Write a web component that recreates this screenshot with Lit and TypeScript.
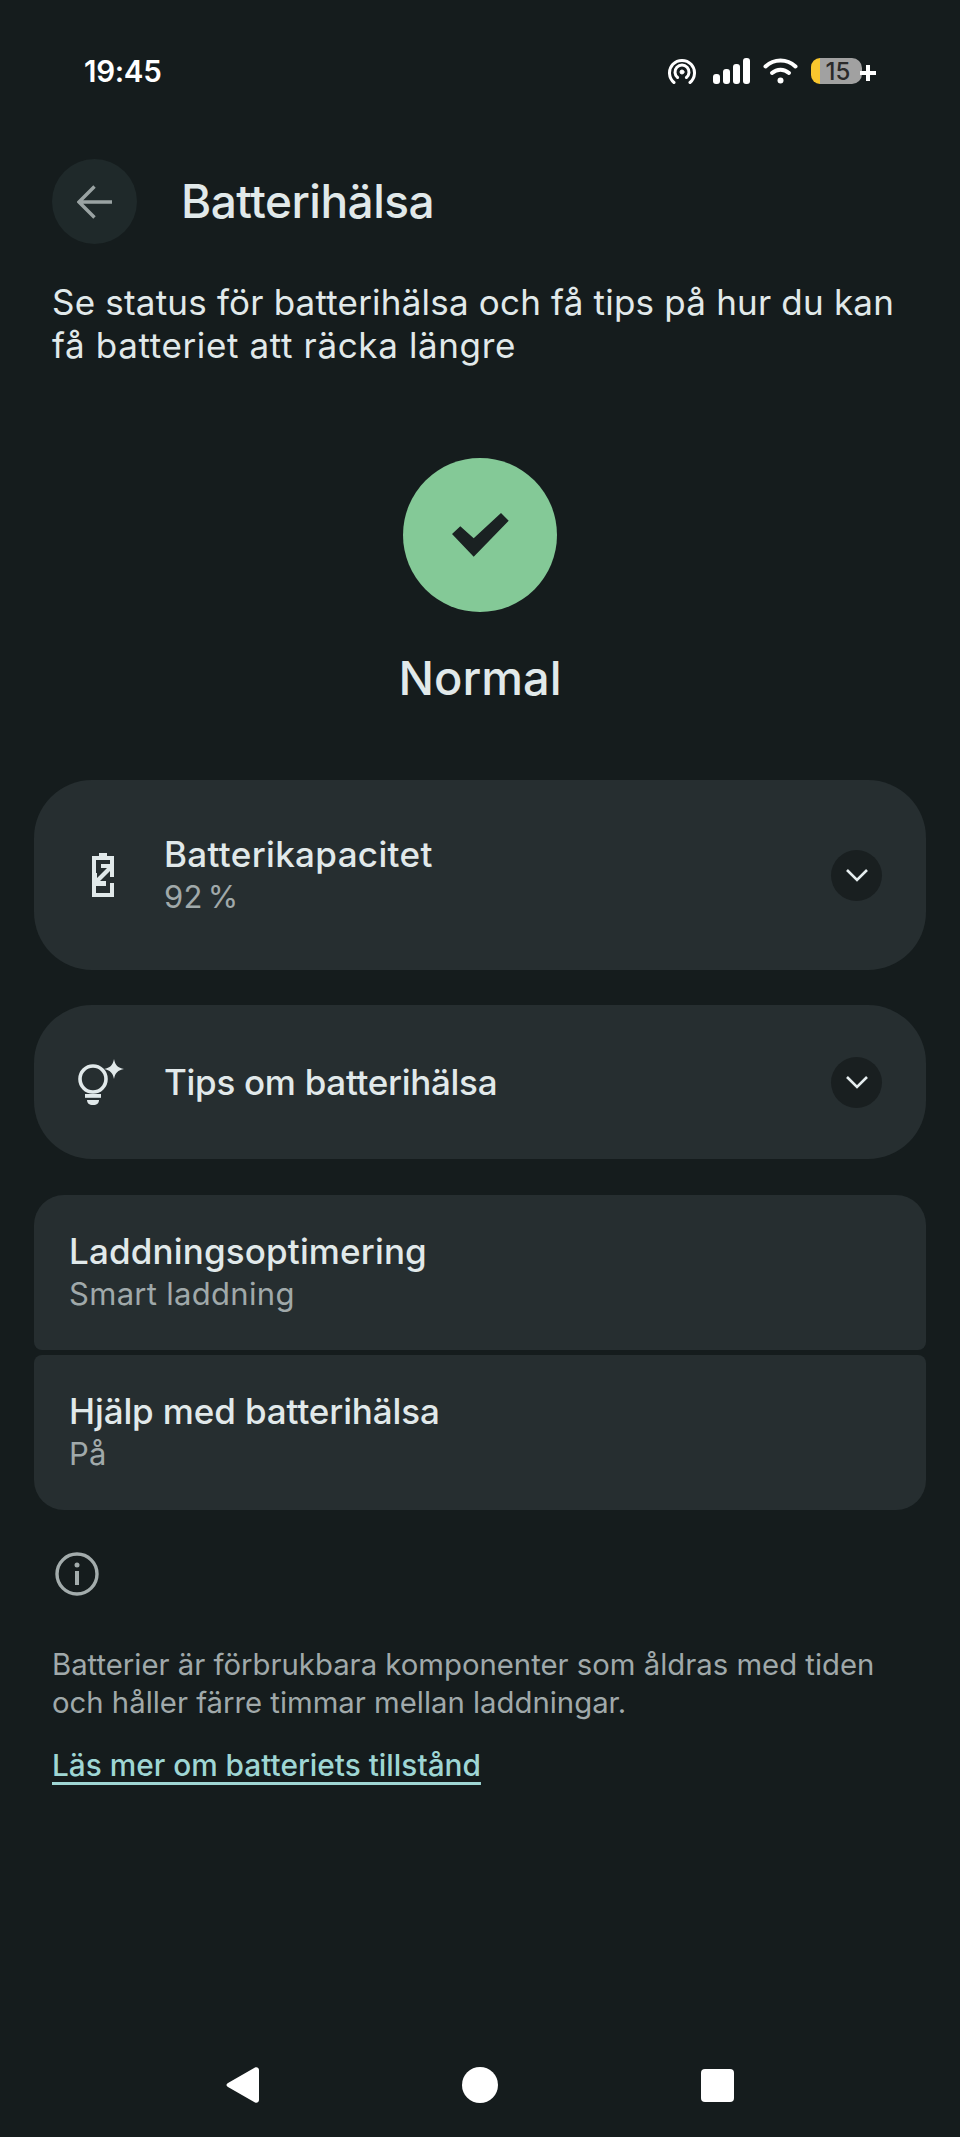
import { LitElement, html, css } from "lit";
import { customElement } from "lit/decorators.js";

const chevron = html`<span class="chev"><svg width="24" height="16" viewBox="0 0 24 16"><path d="M2 3l10 10L22 3" fill="none" stroke="#e6eeef" stroke-width="2.6"/></svg></span>`;

@customElement("app-root")
export class AppRoot extends LitElement {
  static styles = css`
    :host { display: block; width: 960px; height: 2137px; background: #151c1d; font-family: Inter, "Liberation Sans", sans-serif; color: #e1e9ea; overflow: hidden; }
    .page { height: 2137px; display: flex; flex-direction: column; box-sizing: border-box; }
    .status { height: 36px; margin-top: 53px; padding: 0 84px 0 84px; display: flex; align-items: center; justify-content: space-between; }
    .time { font-size: 29.5px; font-weight: 600; color: #fff; line-height: 36px; letter-spacing: -0.3px; }
    .sicons { display: flex; align-items: center; }
    .sicons svg { display: block; }
    .top { display: flex; align-items: center; margin: 70px 0 0 52px; gap: 44px; }
    .back { width: 85px; height: 85px; border-radius: 50%; background: #1f292a; display: flex; align-items: center; justify-content: center; }
    .title { font-size: 46px; font-weight: 500; line-height: 85px; letter-spacing: -0.5px; }
    .desc { margin: 37px 52px 0; font-size: 35px; line-height: 42.5px; letter-spacing: 0.2px; white-space: nowrap; }
    .desc2 { letter-spacing: 0.63px; }
    .hero { margin-top: 92px; display: flex; flex-direction: column; align-items: center; }
    .ok { width: 154px; height: 154px; border-radius: 50%; background: #84c997; display: flex; align-items: center; justify-content: center; }
    .status-name { margin-top: 36px; font-size: 47px; font-weight: 500; line-height: 60px; }
    .card { margin: 0 34px; background: #262e30; display: flex; align-items: center; box-sizing: border-box; }
    .exp { border-radius: 58px; padding: 0 44px 0 0; }
    .c1 { margin-top: 72px; height: 190px; }
    .c2 { margin-top: 35px; height: 154px; }
    .icon { width: 130px; flex: none; display: flex; justify-content: center; }
    .bat { margin-left: 8px; }
    .bulb { margin-left: 4px; }
    .grow { flex: 1; }
    .chev { width: 51px; height: 51px; border-radius: 50%; background: #191f20; display: flex; align-items: center; justify-content: center; }
    .t { font-size: 35px; font-weight: 500; line-height: 43px; white-space: nowrap; }
    .s { font-size: 31px; color: #a0a9aa; line-height: 42px; white-space: nowrap; letter-spacing: 0.3px; }
    .pct { word-spacing: -4px; }
    .ls-a { letter-spacing: 0.35px; }
    .ls-b { letter-spacing: -0.3px; }
    .ls-c { letter-spacing: 0.15px; }
    .ls-d { letter-spacing: -0.12px; }
    .plain { height: 155px; padding: 0 35px; }
    .c3 { margin-top: 36px; border-radius: 30px 30px 8px 8px; }
    .c4 { margin-top: 5px; border-radius: 8px 8px 30px 30px; }
    .info { margin: 41px 0 0 54px; display: block; }
    .foot { margin: 49px 52px 0; font-size: 29.3px; line-height: 38px; color: #a0a9aa; white-space: nowrap; }
    .link { margin: 24px 52px 0; align-self: flex-start; font-size: 29.8px; font-weight: 500; color: #9fd6d4; line-height: 38px; text-decoration: underline; text-underline-offset: 6px; text-decoration-thickness: 2.5px; white-space: nowrap; }
    .nav { margin-top: auto; margin-bottom: 34px; height: 36px; display: flex; align-items: center; justify-content: center; gap: 203px; }
    .nav svg { display: block; }
  `;

  render() {
    return html`<div class="page">
      <div class="status">
        <span class="time">19:45</span>
        <div class="sicons">
          <svg width="28" height="26" viewBox="0 0 28 26" fill="none" stroke="#fff" stroke-width="3" stroke-linecap="round"><path d="M6 24.500A12.500 12.500 0 1 1 22 24.500"/><path d="M9.600 19.500A7 7 0 1 1 18.400 19.500"/><circle cx="14" cy="14" r="2" fill="#fff" stroke-width="1"/></svg>
          <svg style="margin-left:17px" width="37" height="26" viewBox="0 0 37 26" fill="#fff"><rect x="0" y="16" width="7" height="10" rx="3"/><rect x="10" y="11" width="7" height="15" rx="3"/><rect x="20" y="6" width="7" height="20" rx="3"/><rect x="30" y="0" width="7" height="26" rx="3"/></svg>
          <svg style="margin-left:13px" width="35" height="26" viewBox="0 0 35 26" fill="none" stroke="#fff" stroke-width="4" stroke-linecap="round"><path d="M2.500 8.500C11 0.500 24 0.500 32.500 8.500"/><path d="M9 15C14 10.500 21 10.500 26 15"/><circle cx="17.500" cy="22.500" r="3" fill="#fff" stroke="none"/></svg>
          <svg style="margin-left:12px" width="66" height="28" viewBox="0 0 66 28"><path d="M10 1H42a10 10 0 0 1 10 10V17a10 10 0 0 1-10 10H10Z" fill="#a1a1a1"/><path d="M10 1a9 9 0 0 0-9 9V18a9 9 0 0 0 9 9Z" fill="#f8c62e"/><path d="M56 8v6h-6v4h6v6h4v-6h6v-4h-6V8Z" fill="#fff"/><text x="28" y="22.500" text-anchor="middle" font-family="Inter, sans-serif" font-size="24" font-weight="500" fill="#2a2a2a">15</text></svg>
        </div>
      </div>
      <div class="top">
        <div class="back"><svg width="36" height="34" viewBox="0 0 36 34" fill="none" stroke="#9aa3a3" stroke-width="3.400"><path d="M2 17H35M17.500 1.500 2 17l15.500 15.500"/></svg></div>
        <div class="title">Batterihälsa</div>
      </div>
      <div class="desc">Se status för batterihälsa och få tips på hur du kan<br /><span class="desc2">få batteriet att räcka längre</span></div>
      <div class="hero">
        <div class="ok"><svg width="57" height="44" viewBox="0 0 57 44" fill="#1a2122"><path d="M0 21 8.300 13.300 21.700 25.300 49 0 56.700 7.700 21.700 43.700Z"/></svg></div>
        <div class="status-name">Normal</div>
      </div>
      <div class="card exp c1">
        <div class="icon"><svg class="bat" width="22" height="44" viewBox="0 0 22 44" fill="#e1e9ea"><path d="M7 0h8v3h7v8h-4V7H4v13H0V3h7Z" /><path d="M0 30h4v10h14V30h4v14H0Z"/><path d="M9 11h13v13h-4v-6L8 28h6v5H0V20h5v5L15 15H9Z"/></svg></div>
        <div class="grow">
          <div class="t ls-a">Batterikapacitet</div>
          <div class="s pct">92 %</div>
        </div>
        ${chevron}
      </div>
      <div class="card exp c2">
        <div class="icon"><svg class="bulb" width="46" height="47" viewBox="0 0 46 47"><circle cx="15" cy="20" r="13" fill="none" stroke="#e1e9ea" stroke-width="3.600"/><rect x="7" y="35" width="16" height="3.800" fill="#e1e9ea"/><path d="M9 41h12c0 3-2 5-6 5s-6-2-6-5Z" fill="#e1e9ea"/><path d="M36 0c1 6 4 9 10 10-6 1-9 4-10 10-1-6-4-9-10-10 6-1 9-4 10-10Z" fill="#e1e9ea"/></svg></div>
        <div class="grow"><div class="t ls-b">Tips om batterihälsa</div></div>
        ${chevron}
      </div>
      <div class="card plain c3"><div>
        <div class="t ls-c">Laddningsoptimering</div>
        <div class="s">Smart laddning</div>
      </div></div>
      <div class="card plain c4"><div>
        <div class="t ls-d">Hjälp med batterihälsa</div>
        <div class="s">På</div>
      </div></div>
      <svg class="info" width="46" height="46" viewBox="0 0 46 46" fill="none"><circle cx="23" cy="23" r="20" stroke="#a3acac" stroke-width="3.400"/><rect x="21" y="20" width="4" height="14" fill="#a3acac"/><circle cx="23" cy="14" r="2.500" fill="#a3acac"/></svg>
      <div class="foot">Batterier är förbrukbara komponenter som åldras med tiden<br />och håller färre timmar mellan laddningar.</div>
      <div class="link">Läs mer om batteriets tillstånd</div>
      <div class="nav">
        <svg width="33" height="36" viewBox="0 0 33 36" fill="#fff"><path d="M29 .5c2-1 4 .5 4 2.500v30c0 2-2 3.500-4 2.500L2 20c-2-1-2-3 0-4Z"/></svg>
        <svg width="36" height="36" viewBox="0 0 36 36" fill="#fff"><circle cx="18" cy="18" r="18"/></svg>
        <svg width="33" height="33" viewBox="0 0 33 33" fill="#fff"><rect width="33" height="33" rx="4"/></svg>
      </div>
    </div>`;
  }
}
